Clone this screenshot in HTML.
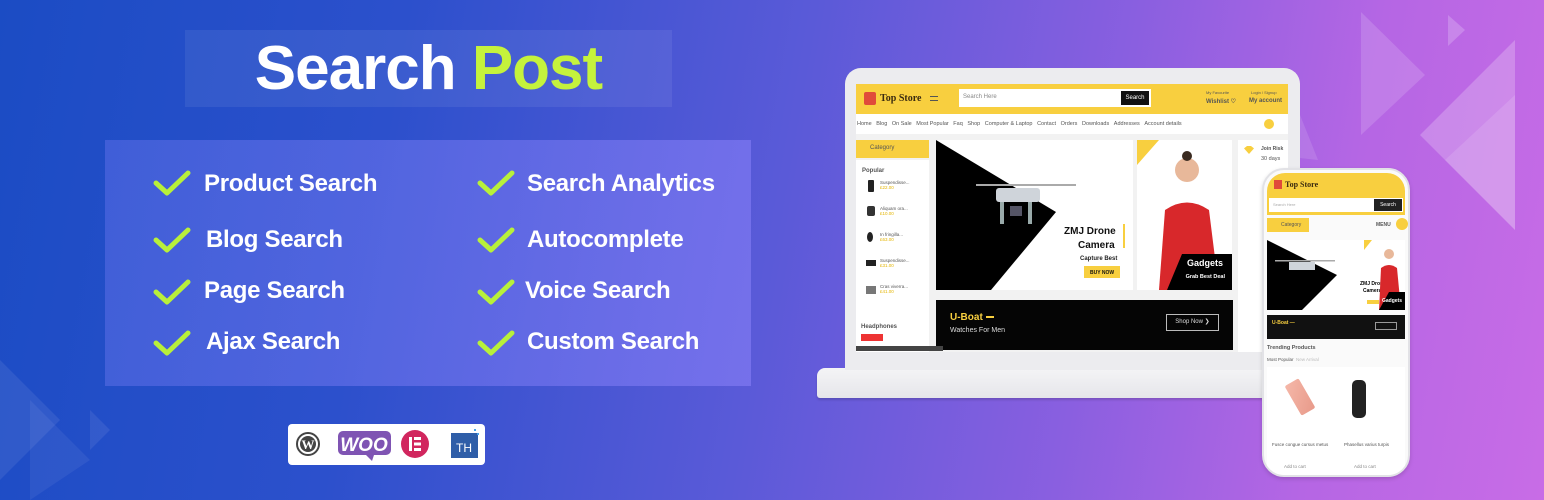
<!DOCTYPE html>
<html><head><meta charset="utf-8"><style>
*{margin:0;padding:0;box-sizing:border-box}
body{width:1544px;height:500px;overflow:hidden;position:relative;font-family:"Liberation Sans",sans-serif;
background:linear-gradient(100deg,#1b4cc4 0%,#2c50cc 25%,#5a5ad8 50%,#8a5fe0 70%,#b566e4 85%,#c86ce6 100%);}
.a{position:absolute}
.t{color:#fff;font-weight:bold;font-size:24px;white-space:nowrap;letter-spacing:-0.3px}
.s{font-size:6px;color:#555;white-space:nowrap}
</style></head><body>
<svg class="a" style="left:0;top:0" width="1544" height="500">
<polygon points="0,360 60,420 0,480" fill="rgba(255,255,255,0.08)"/>
<polygon points="30,400 90,460 30,500" fill="rgba(255,255,255,0.06)"/>
<polygon points="90,410 110,430 90,450" fill="rgba(255,255,255,0.08)"/>
<polygon points="1361,12 1425,75 1361,135" fill="rgba(255,255,255,0.15)"/>
<polygon points="1448,15 1465,30 1448,46" fill="rgba(255,255,255,0.2)"/>
<polygon points="1515,40 1515,230 1420,135" fill="rgba(255,255,255,0.22)"/>
<polygon points="1515,95 1515,230 1445,160" fill="rgba(255,255,255,0.12)"/>
<polygon points="1300,115 1318,160 1300,158" fill="rgba(255,255,255,0.12)"/>
</svg>
<div class="a" style="left:185px;top:30px;width:487px;height:77px;background:rgba(255,255,255,0.07)"></div>
<div class="a" style="left:0;top:30px;width:857px;text-align:center;font-size:62px;font-weight:bold;color:#fff;letter-spacing:-1px;line-height:77px">Search <span style="color:#c5f23c">Post</span></div>
<div class="a" style="left:105px;top:140px;width:646px;height:246px;background:linear-gradient(100deg,rgba(110,120,240,0.4),rgba(140,130,250,0.55))"></div>
<svg class="a" style="left:0;top:0" width="780" height="400" fill="none" stroke="#b8f03a" stroke-width="5" stroke-linecap="round" stroke-linejoin="round">
<path d="M156,183 L167,193 L188,173"/><path d="M156,240 L167,250 L188,230"/><path d="M156,292 L167,302 L188,282"/><path d="M156,343 L167,353 L188,333"/>
<path d="M480,183 L491,193 L512,173"/><path d="M480,240 L491,250 L512,230"/><path d="M480,292 L491,302 L512,282"/><path d="M480,343 L491,353 L512,333"/>
</svg>
<div class="a t" style="left:204px;top:170px">Product Search</div>
<div class="a t" style="left:206px;top:226px">Blog Search</div>
<div class="a t" style="left:204px;top:277px">Page Search</div>
<div class="a t" style="left:206px;top:328px">Ajax Search</div>
<div class="a t" style="left:527px;top:170px">Search Analytics</div>
<div class="a t" style="left:527px;top:226px">Autocomplete</div>
<div class="a t" style="left:525px;top:277px">Voice Search</div>
<div class="a t" style="left:527px;top:328px">Custom Search</div>
<!-- logos -->
<div class="a" style="left:288px;top:424px;width:197px;height:41px;background:#fff;border-radius:4px"></div>
<svg class="a" style="left:288px;top:424px" width="197" height="41">
<circle cx="20" cy="20" r="11" fill="#fff" stroke="#444" stroke-width="2"/><circle cx="20" cy="20" r="8" fill="#444"/><text x="20" y="25" font-size="13" font-family="Liberation Serif" font-weight="bold" fill="#fff" text-anchor="middle">W</text>
<rect x="50" y="7" width="53" height="24" rx="5" fill="#7f54b3"/><polygon points="78,31 86,31 84,37" fill="#7f54b3"/><text x="76" y="27" font-size="19" font-weight="bold" fill="#fff" text-anchor="middle" font-style="italic">WOO</text>
<circle cx="127" cy="20" r="14" fill="#d1265e"/><rect x="121" y="13" width="3" height="14" fill="#fff"/><rect x="126" y="13" width="7" height="3" fill="#fff"/><rect x="126" y="18.5" width="7" height="3" fill="#fff"/><rect x="126" y="24" width="7" height="3" fill="#fff"/>
<rect x="163" y="9" width="27" height="25" fill="#2f5ea8"/><text x="176" y="28" font-size="12" fill="#fff" text-anchor="middle">TH</text>
<rect x="186" y="5" width="2" height="2" fill="#4aa3e8"/><rect x="189" y="9" width="2" height="2" fill="#4aa3e8"/>
</svg>
<!-- laptop -->
<div class="a" style="left:817px;top:368px;width:460px;height:30px;background:linear-gradient(#f4f4f6,#e6e6ea);border-radius:8px 8px 3px 3px;box-shadow:0 2px 2px rgba(0,0,0,.15)"></div>
<div class="a" style="left:845px;top:68px;width:455px;height:302px;background:#ececef;border-radius:16px 16px 0 0"></div>
<div class="a" style="left:856px;top:84px;width:432px;height:268px;background:#f2f2f2;overflow:hidden">
 <div class="a" style="left:0;top:0;width:432px;height:30px;background:#f8cf3f"></div>
 <div class="a" style="left:8px;top:8px;width:12px;height:13px;background:#e04a3a;border-radius:2px"></div>
 <div class="a" style="left:24px;top:9px;font:bold 10px 'Liberation Serif',serif;color:#3a2a10">Top Store</div>
 <div class="a" style="left:74px;top:12px;width:8px;height:5px;border-top:1.5px solid #555;border-bottom:1.5px solid #555"></div>
 <div class="a" style="left:103px;top:5px;width:192px;height:18px;background:#fff"><div class="a s" style="left:4px;top:5px;color:#888">Search Here</div><div class="a" style="right:2px;top:2px;width:28px;height:14px;background:#111;color:#fff;font-size:6px;text-align:center;line-height:14px">Search</div></div>
 <div class="a s" style="left:350px;top:6px;font-size:4px">My Favourite</div><div class="a s" style="left:350px;top:14px;font-weight:bold">Wishlist ♡</div>
 <div class="a s" style="left:395px;top:6px;font-size:4px">Login / Signup</div><div class="a s" style="left:393px;top:14px;font-weight:bold">My account</div>
 <div class="a" style="left:0;top:30px;width:432px;height:20px;background:#fff"></div>
 <div class="a s" style="left:1px;top:37px;font-size:5.5px">Home &nbsp;&nbsp;Blog &nbsp;&nbsp;On Sale &nbsp;&nbsp;Most Popular &nbsp;&nbsp;Faq &nbsp;&nbsp;Shop &nbsp;&nbsp;Computer &amp; Laptop &nbsp;&nbsp;Contact &nbsp;&nbsp;Orders &nbsp;&nbsp;Downloads &nbsp;&nbsp;Addresses &nbsp;&nbsp;Account details</div>
 <div class="a" style="left:408px;top:35px;width:10px;height:10px;border-radius:50%;background:#f8cf3f"></div>
 <div class="a" style="left:0;top:56px;width:73px;height:18px;background:#f8cf3f"><div class="a s" style="left:14px;top:5px">Category</div></div>
 <div class="a" style="left:0;top:76px;width:73px;height:192px;background:#fff"></div>
 <div class="a s" style="left:6px;top:84px;font-weight:bold">Popular</div>
 <div class="a" style="left:12px;top:96px;width:6px;height:12px;background:#222;border-radius:1px"></div>
 <div class="a" style="left:11px;top:122px;width:8px;height:10px;background:#333;border-radius:2px"></div>
 <div class="a" style="left:11px;top:148px;width:6px;height:10px;background:#222;border-radius:50%"></div>
 <div class="a" style="left:10px;top:176px;width:10px;height:6px;background:#222"></div>
 <div class="a" style="left:10px;top:202px;width:10px;height:8px;background:#777"></div>
 <div class="a s" style="left:24px;top:96px;font-size:4.5px">Suspendisse...<br><span style="color:#e4b400">£22.00</span></div>
 <div class="a s" style="left:24px;top:122px;font-size:4.5px">Aliquam ora...<br><span style="color:#e4b400">£10.00</span></div>
 <div class="a s" style="left:24px;top:148px;font-size:4.5px">In fringilla...<br><span style="color:#e4b400">£63.00</span></div>
 <div class="a s" style="left:24px;top:174px;font-size:4.5px">Suspendisse...<br><span style="color:#e4b400">£31.00</span></div>
 <div class="a s" style="left:24px;top:200px;font-size:4.5px">Cras viverra...<br><span style="color:#e4b400">£41.00</span></div>
 <div class="a s" style="left:5px;top:240px;font-weight:bold">Headphones</div>
 <div class="a" style="left:5px;top:250px;width:22px;height:7px;background:#e33"></div>
 <div class="a" style="left:80px;top:56px;width:197px;height:150px;background:#fff"></div>
 <svg class="a" style="left:80px;top:56px" width="197" height="150"><polygon points="0,0 120,72 55,150 0,150" fill="#000"/>
 <rect x="40" y="44" width="100" height="2" fill="#aaa"/><rect x="60" y="48" width="44" height="14" rx="3" fill="#cfd4da"/><rect x="64" y="62" width="4" height="22" fill="#9aa"/><rect x="92" y="62" width="4" height="22" fill="#9aa"/><rect x="74" y="66" width="12" height="10" fill="#556"/>
 <text x="128" y="94" font-size="10" font-weight="bold" fill="#111">ZMJ Drone</text><text x="142" y="108" font-size="10" font-weight="bold" fill="#111">Camera</text><rect x="187" y="84" width="2" height="24" fill="#f8cf3f"/>
 <text x="144" y="120" font-size="6" font-weight="bold" fill="#222">Capture Best</text><rect x="148" y="126" width="36" height="12" fill="#f8cf3f"/><text x="154" y="134" font-size="5" font-weight="bold" fill="#111">BUY NOW</text></svg>
 <div class="a" style="left:281px;top:56px;width:95px;height:150px;background:#fff;overflow:hidden">
  <svg width="95" height="150"><polygon points="0,0 22,0 0,25" fill="#f8cf3f"/><circle cx="50" cy="30" r="12" fill="#e8b89a"/><circle cx="50" cy="16" r="5" fill="#3a2a20"/><path d="M22,150 L28,70 Q50,55 72,70 L82,150Z" fill="#d8282b"/><polygon points="30,150 95,150 95,114 45,114" fill="#000"/>
  <text x="86" y="126" font-size="9" font-weight="bold" fill="#fff" text-anchor="end">Gadgets</text><text x="88" y="138" font-size="5.5" font-weight="bold" fill="#fff" text-anchor="end">Grab Best Deal</text></svg>
 </div>
 <div class="a" style="left:382px;top:56px;width:50px;height:212px;background:#fff"></div>
 <div class="a" style="left:388px;top:62px;width:10px;height:8px;background:#f8cf3f;clip-path:polygon(0 30%,30% 0,70% 0,100% 30%,50% 100%)"></div>
 <div class="a s" style="left:405px;top:62px;font-weight:bold;font-size:5px">Join Risk</div><div class="a s" style="left:405px;top:72px;font-size:5.5px">30 days</div>
 <div class="a" style="left:80px;top:216px;width:297px;height:50px;background:#050505"></div>
 <div class="a" style="left:94px;top:228px;font-size:10px;font-weight:bold;color:#f8cf3f">U-Boat <span style="display:inline-block;width:8px;height:2px;background:#f8cf3f;vertical-align:middle"></span></div>
 <div class="a" style="left:94px;top:243px;font-size:7px;color:#ddd">Watches For Men</div>
 <div class="a" style="left:310px;top:230px;width:53px;height:17px;border:1px solid #bbb;color:#ddd;font-size:6px;line-height:15px;text-align:center">Shop Now ❯</div>
 <div class="a" style="left:0;top:262px;width:87px;height:5px;background:#444"></div>
</div>
<!-- phone -->
<div class="a" style="left:1262px;top:168px;width:148px;height:309px;background:#fafafa;border:2px solid #e2e2e6;border-radius:22px;box-shadow:0 2px 4px rgba(0,0,0,.15);overflow:hidden">
 <div class="a" style="left:3px;top:3px;width:138px;height:24px;background:#f8cf3f;border-radius:18px 18px 0 0"></div>
 <div class="a" style="left:10px;top:10px;width:8px;height:9px;background:#e04a3a"></div>
 <div class="a" style="left:21px;top:10px;font:bold 8px 'Liberation Serif',serif;color:#3a2a10">Top Store</div>
 <div class="a" style="left:3px;top:27px;width:138px;height:18px;background:#f8cf3f"><div class="a" style="left:2px;top:1px;width:134px;height:14px;background:#fff"><div class="a s" style="left:4px;top:4px;font-size:4px;color:#aaa">Search Here</div><div class="a" style="right:1px;top:1px;width:28px;height:12px;background:#222;color:#fff;font-size:5px;text-align:center;line-height:12px">Search</div></div></div>
 <div class="a" style="left:3px;top:48px;width:42px;height:14px;background:#f8cf3f"><div class="a s" style="left:14px;top:4px;font-size:5px">Category</div></div>
 <div class="a s" style="left:112px;top:52px;font-size:5px;font-weight:bold">MENU</div><div class="a" style="left:132px;top:48px;width:12px;height:12px;border-radius:50%;background:#f8cf3f"></div>
 <div class="a" style="left:3px;top:70px;width:138px;height:70px;background:#fff"></div>
 <svg class="a" style="left:3px;top:70px" width="138" height="70"><polygon points="0,0 70,35 35,70 0,70" fill="#000"/><rect x="8" y="20" width="60" height="1.5" fill="#aaa"/><rect x="22" y="22" width="26" height="8" fill="#cfd4da"/><text x="93" y="45" font-size="5" font-weight="bold">ZMJ Drone</text><text x="96" y="52" font-size="5" font-weight="bold">Camera</text><rect x="100" y="60" width="12" height="4" fill="#f8cf3f"/>
 <polygon points="97,0 105,0 97,10" fill="#f8cf3f"/><circle cx="122" cy="14" r="5" fill="#e8b89a"/><path d="M112,70 L114,28 Q122,22 130,28 L134,70Z" fill="#d8282b"/><polygon points="112,70 138,70 138,52 122,52" fill="#000"/><text x="135" y="62" font-size="5" font-weight="bold" fill="#fff" text-anchor="end">Gadgets</text></svg>
 <div class="a" style="left:3px;top:145px;width:138px;height:24px;background:#111"><div class="a" style="left:5px;top:5px;font-size:5px;font-weight:bold;color:#f8cf3f">U-Boat —</div><div class="a" style="left:108px;top:7px;width:22px;height:8px;border:1px solid #999"></div></div>
 <div class="a s" style="left:3px;top:175px;font-weight:bold;font-size:5.5px">Trending Products</div>
 <div class="a s" style="left:3px;top:187px;font-size:4.5px">Most Popular <span style="color:#bbb">&nbsp;New Arrival</span></div>
 <div class="a" style="left:3px;top:197px;width:138px;height:108px;background:#fff"></div>
 <div class="a" style="left:28px;top:210px;width:16px;height:34px;background:linear-gradient(135deg,#f5b7a8,#e89a8a);transform:rotate(-30deg);border-radius:2px"></div>
 <div class="a" style="left:88px;top:210px;width:14px;height:38px;background:#222;border-radius:5px"></div>
 <div class="a s" style="left:8px;top:272px;font-size:4.5px">Fusce congue cursus metus</div>
 <div class="a s" style="left:80px;top:272px;font-size:4.5px">Phasellus varius turpis</div>
 <div class="a s" style="left:20px;top:294px;font-size:4.5px;color:#888">Add to cart</div>
 <div class="a s" style="left:90px;top:294px;font-size:4.5px;color:#888">Add to cart</div>
</div>
</body></html>
